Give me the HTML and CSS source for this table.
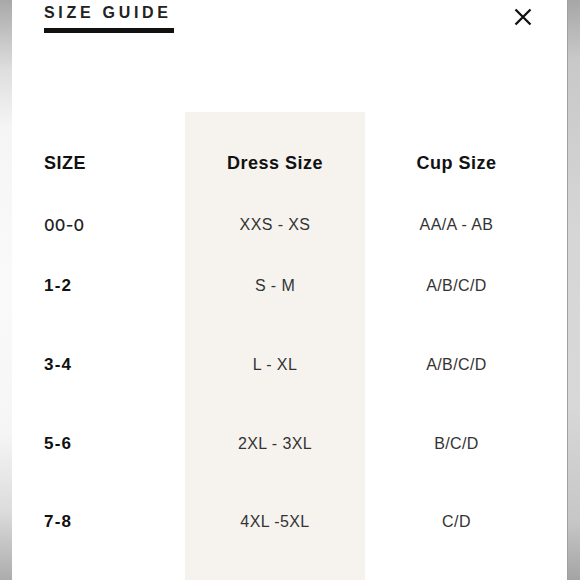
FILE: index.html
```html
<!DOCTYPE html>
<html lang="en">
<head>
<meta charset="utf-8">
<title>Size Guide</title>
<link rel="stylesheet" href="styles.css">
</head>
<body>
<div class="frame">
  <div class="edge edge-left"></div>
  <main class="sheet">
    <header class="sheet-head">
      <h1 class="title">SIZE GUIDE</h1>
      <button class="close" aria-label="Close">
        <svg width="18" height="18" viewBox="0 0 18 18"><path d="M1.5 1.5 L16.5 16.5 M16.5 1.5 L1.5 16.5" stroke="#111" stroke-width="2.3" fill="none"/></svg>
      </button>
    </header>
    <div class="table">
      <div class="cell th first">SIZE</div>
      <div class="cell th">Dress Size</div>
      <div class="cell th">Cup Size</div>

      <div class="cell first medium">00-0</div>
      <div class="cell">XXS - XS</div>
      <div class="cell">AA/A - AB</div>

      <div class="cell first">1-2</div>
      <div class="cell">S - M</div>
      <div class="cell">A/B/C/D</div>

      <div class="cell first">3-4</div>
      <div class="cell">L - XL</div>
      <div class="cell">A/B/C/D</div>

      <div class="cell first">5-6</div>
      <div class="cell">2XL - 3XL</div>
      <div class="cell">B/C/D</div>

      <div class="cell first">7-8</div>
      <div class="cell">4XL -5XL</div>
      <div class="cell">C/D</div>
    </div>
  </main>
  <div class="edge edge-right"></div>
</div>
</body>
</html>
```
FILE: styles.css
```css
* { box-sizing: border-box; }
html, body { margin: 0; padding: 0; background: #fff; }
body { font-family: "Liberation Sans", Arial, sans-serif; color: #222; }

.frame {
  display: flex;
  width: 580px;
  height: 580px;
  overflow: hidden;
}

.edge { flex: none; height: 100%; }
.edge-left {
  width: 12px;
  background: linear-gradient(to bottom, #a8a8a8 0%, #dedede 12%, #f5f5f5 22%, #fafafa 50%, #f5f5f5 75%, #dcdcdc 88%, #acacac 100%);
}
.edge-right {
  width: 13px;
  border-left: 1px solid #a0a0a0;
  background: linear-gradient(to bottom, #a6a6a6 0%, #c8c8c8 10%, #d6d6d6 40%, #d8d8d8 70%, #c6c6c6 90%, #a4a4a4 100%);
}

.sheet {
  flex: 1;
  padding: 0 19px 0 32px;
  display: flex;
  flex-direction: column;
}

.sheet-head {
  height: 112px;
  display: flex;
  justify-content: space-between;
  align-items: flex-start;
  padding-top: 3px;
}

.title {
  margin: 0;
  font-size: 16px;
  line-height: 20px;
  font-weight: 700;
  letter-spacing: 3.7px;
  color: #222;
  padding-bottom: 5px;
  border-bottom: 5px solid #111;
  width: 130px;
  white-space: nowrap;
}

.close {
  margin: 5px 16px 0 0;
  padding: 0;
  border: 0;
  background: none;
  width: 18px;
  height: 18px;
  display: flex;
}

.table {
  flex: 1;
  display: grid;
  grid-template-columns: 141px 180px 1fr;
  grid-template-rows: 62px 61px 79px 79px 78px 1fr;
  padding-top: 41px;
  background: linear-gradient(to right, transparent 141px, #f6f3ef 141px, #f6f3ef 321px, transparent 321px);
}

.cell {
  font-size: 16px;
  line-height: 20px;
  letter-spacing: 0.4px;
  color: #333;
  text-align: center;
}

.cell.first {
  text-align: left;
  font-size: 17px;
  font-weight: 700;
  letter-spacing: 1.2px;
  color: #111;
}

.cell.medium {
  font-family: "Inter", "Liberation Sans", sans-serif;
  font-weight: 500;
  font-size: 16.5px;
  letter-spacing: 0.2px;
  color: #222;
}

.cell.th {
  font-size: 18px;
  font-weight: 700;
  letter-spacing: 0.5px;
  color: #111;
}
```
